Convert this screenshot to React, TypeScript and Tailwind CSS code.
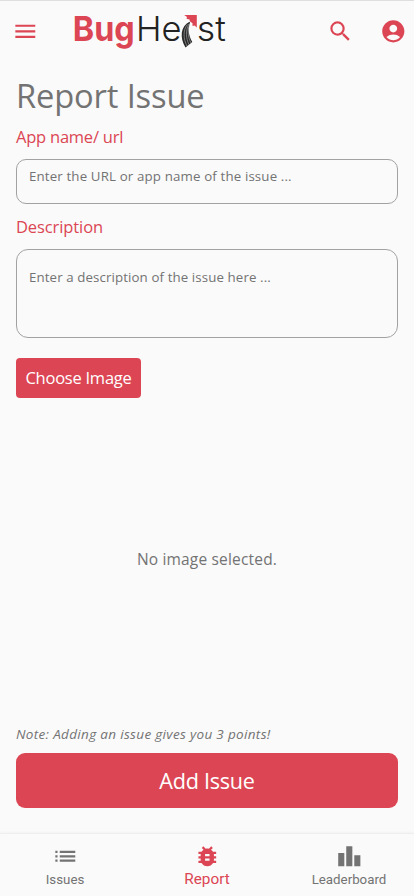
import { MdAccountCircle, MdBugReport, MdLeaderboard, MdList, MdMenu, MdSearch } from "react-icons/md";

function Logo() {
  return (
    <svg className="ml-[34px] h-[62px] w-[156px] shrink-0" viewBox="72 1 156 62" fontFamily="Inter, sans-serif">
      <text x="72.800" y="40.6" fontSize="34.5" fontWeight="700" fill="#dc4654" textLength="62" lengthAdjust="spacingAndGlyphs">Bug</text>
      <text x="136" y="40.6" fontSize="34.5" fontWeight="300" fill="#222" textLength="45.5" lengthAdjust="spacingAndGlyphs">He</text>
      <text x="196.800" y="40.6" fontSize="34.5" fontWeight="300" fill="#222" textLength="29" lengthAdjust="spacingAndGlyphs">st</text>
      <path d="M184.200 15H196.800V27.600L194.500 25.500L192.500 26V23.300L190 21.500L189.500 19.500L186.500 18.800L187 17Z" fill="#dc4654" />
      <path d="M189.500 21.800C180.500 26 179.500 38 185.500 47.500L192.300 42C188.500 35 187.600 29 190 22.500Z" fill="#292929" />
      <path d="M187.300 24.500c-4.500 6-4 14.500-.3 21.500M188.800 24c-3.500 7-2.800 14 .2 20.700M189.300 25.500c-2 6-1.200 11.500 1.600 17.500" fill="none" stroke="#bbb" strokeWidth=".55" />
    </svg>
  );
}

function NavItem({ icon, label, active = false }: { icon: React.ReactNode; label: string; active?: boolean }) {
  return (
    <button className={`flex flex-col items-center ${active ? "w-[142px] text-[#dc4654]" : "w-[130px] text-[#737373]"}`}>
      <span className="mt-[9px] flex h-[27px] items-start">{icon}</span>
      <span className={`font-[Roboto,sans-serif] ${active ? "text-[15.3px] leading-[18px]" : "mt-[2px] text-[13.3px] leading-4"}`}>{label}</span>
    </button>
  );
}

export default function App() {
  return (
    <div className="flex h-[896px] w-full flex-col bg-[#fafafa] font-['Open_Sans',sans-serif] text-[#737373]">
      <header className="flex h-[63px] shrink-0 items-center border-t border-[#dedede] pb-px text-[#dc4654]">
        <MdMenu className="ml-[11.500px] size-[26.600px] shrink-0" />
        <Logo />
        <MdSearch className="ml-[99px] size-[26.600px] shrink-0" />
        <MdAccountCircle className="ml-[26.500px] size-[26.600px] shrink-0" />
      </header>
      <main className="flex min-h-0 flex-1 flex-col px-4">
        <h1 className="mt-[10px] h-[46px] text-[32.700px] leading-[46px] tracking-[-0.15px]">Report Issue</h1>
        <label className="mt-[6px] h-6 text-[16.500px] leading-6 tracking-[-0.23px] text-[#dc4654]">App name/ url</label>
        <div className="mt-[10px] h-[45px] shrink-0 rounded-[10px] border border-[#a2a2a2] px-3 pt-[6px] text-[13.300px] leading-5 tracking-[0.14px]">Enter the URL or app name of the issue ...</div>
        <label className="mt-[11px] h-6 text-[16.500px] leading-6 tracking-[-0.1px] text-[#dc4654]">Description</label>
        <div className="mt-[10px] h-[89px] shrink-0 rounded-[12px] border border-[#a2a2a2] px-3 pt-[17px] text-[13.300px] leading-5 tracking-[0.1px]">Enter a description of the issue here ...</div>
        <button className="mt-[20px] h-10 w-[125px] shrink-0 rounded-[4px] bg-[#dc4654] text-[16.500px] tracking-[-0.25px] text-white">Choose Image</button>
        <div className="flex h-[324px] items-center justify-center text-[15.500px] tracking-[0.18px]">No image selected.</div>
        <p className="mt-auto h-5 text-[13.500px] leading-5 tracking-[0.33px] italic">Note: Adding an issue gives you 3 points!</p>
        <button className="mt-[9px] mb-[25px] h-[55px] shrink-0 rounded-[9px] bg-[#dc4654] pt-px text-[21.600px] tracking-[-0.25px] text-white">Add Issue</button>
      </main>
      <nav className="flex h-[63px] shrink-0 justify-between border-t border-[#eeeeee] shadow-[0_-1px_2px_rgba(0,0,0,0.03)]">
        <NavItem icon={<MdList className="size-[26.600px]" />} label="Issues" />
        <NavItem icon={<MdBugReport className="size-[26.600px]" />} label="Report" active />
        <NavItem icon={<MdLeaderboard className="size-[26.600px]" />} label="Leaderboard" />
      </nav>
    </div>
  );
}
